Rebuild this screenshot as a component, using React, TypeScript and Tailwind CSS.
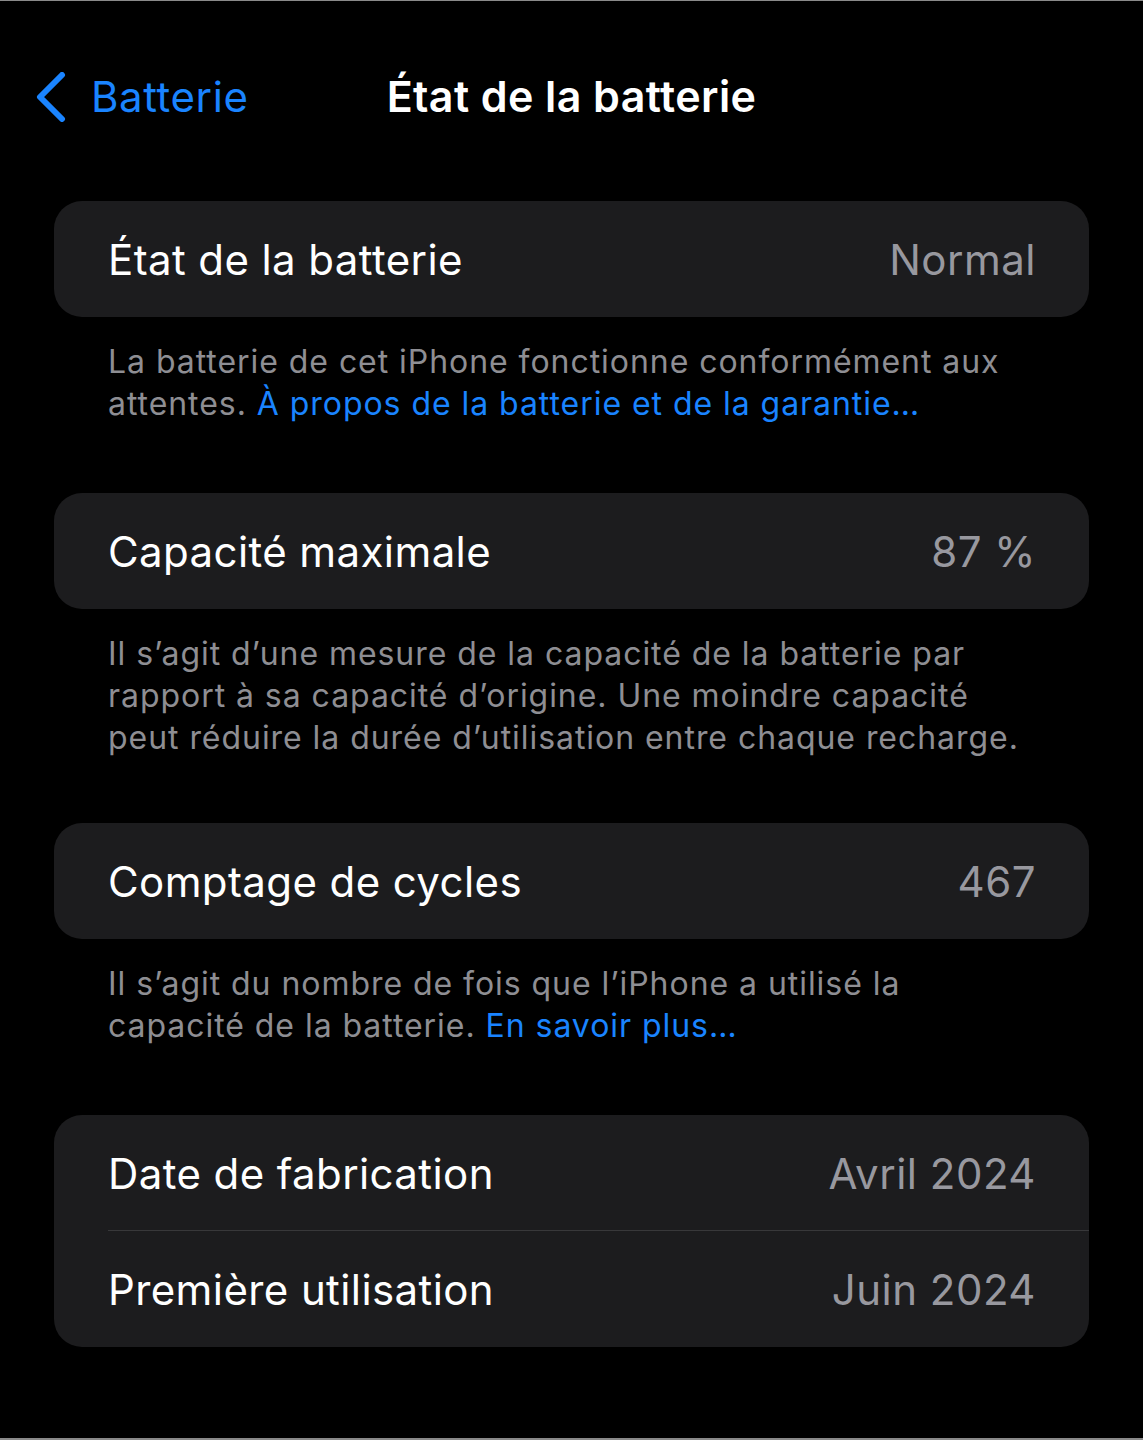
import { ReactNode } from 'react'

const font = { fontFamily: 'Inter, "Noto Sans", sans-serif' }

function Row({ label, value, divider }: { label: string; value: string; divider?: boolean }) {
  return (
    <div className="relative flex h-[116px] items-center justify-between pl-[54px] pr-[53px]">
      <span className="text-[42px] text-white tracking-[0.4px]">{label}</span>
      <span className="text-[42px] text-[#98989f] tracking-[0.5px]">{value}</span>
      {divider && <div className="absolute bottom-0 left-[54px] right-0 h-px bg-[#38383a]" />}
    </div>
  )
}

function Card({ children }: { children: ReactNode }) {
  return <div className="mx-[54px] overflow-hidden rounded-[28px] bg-[#1c1c1e]">{children}</div>
}

function Footer({ children, mb }: { children: ReactNode; mb: string }) {
  return (
    <p className={`pl-[108px] pr-[100px] pt-[24px] text-[32px] leading-[42px] tracking-[0.95px] text-[#8e8e93] ${mb}`}>
      {children}
    </p>
  )
}

export default function App() {
  return (
    <div className="min-h-[1440px] w-[1143px] bg-black border-t border-b-2 border-[#8a8a8a]" style={font}>
      {/* nav */}
      <div className="relative flex h-[191px] items-center">
        <div className="flex items-center gap-[25px] pl-[35px]">
          <svg width="31" height="50" viewBox="0 0 31 50" fill="none">
            <path d="M27 3 L5 25 L27 47" stroke="#1a84ff" strokeWidth="6" strokeLinecap="round" strokeLinejoin="round" />
          </svg>
          <span className="text-[42px] text-[#1a84ff] tracking-[0.6px]">Batterie</span>
        </div>
        <div className="absolute inset-x-0 text-center text-[43px] font-semibold text-white tracking-[0.4px]">
          État de la batterie
        </div>
      </div>

      <div className="pt-[9px]">
        <Card>
          <Row label="État de la batterie" value="Normal" />
        </Card>
        <Footer mb="mb-[68px]">
          La batterie de cet iPhone fonctionne conformément aux attentes.{' '}
          <span className="text-[#1a84ff]">À propos de la batterie et de la garantie…</span>
        </Footer>

        <Card>
          <Row label="Capacité maximale" value="87 %" />
        </Card>
        <Footer mb="mb-[64px]">
          Il s’agit d’une mesure de la capacité de la batterie par rapport à sa capacité d’origine. Une moindre
          capacité peut réduire la durée d’utilisation entre chaque recharge.
        </Footer>

        <Card>
          <Row label="Comptage de cycles" value="467" />
        </Card>
        <Footer mb="mb-[68px]">
          Il s’agit du nombre de fois que l’iPhone a utilisé la capacité de la batterie.{' '}
          <span className="text-[#1a84ff]">En savoir plus…</span>
        </Footer>

        <Card>
          <Row label="Date de fabrication" value="Avril 2024" divider />
          <Row label="Première utilisation" value="Juin 2024" />
        </Card>
      </div>
    </div>
  )
}
